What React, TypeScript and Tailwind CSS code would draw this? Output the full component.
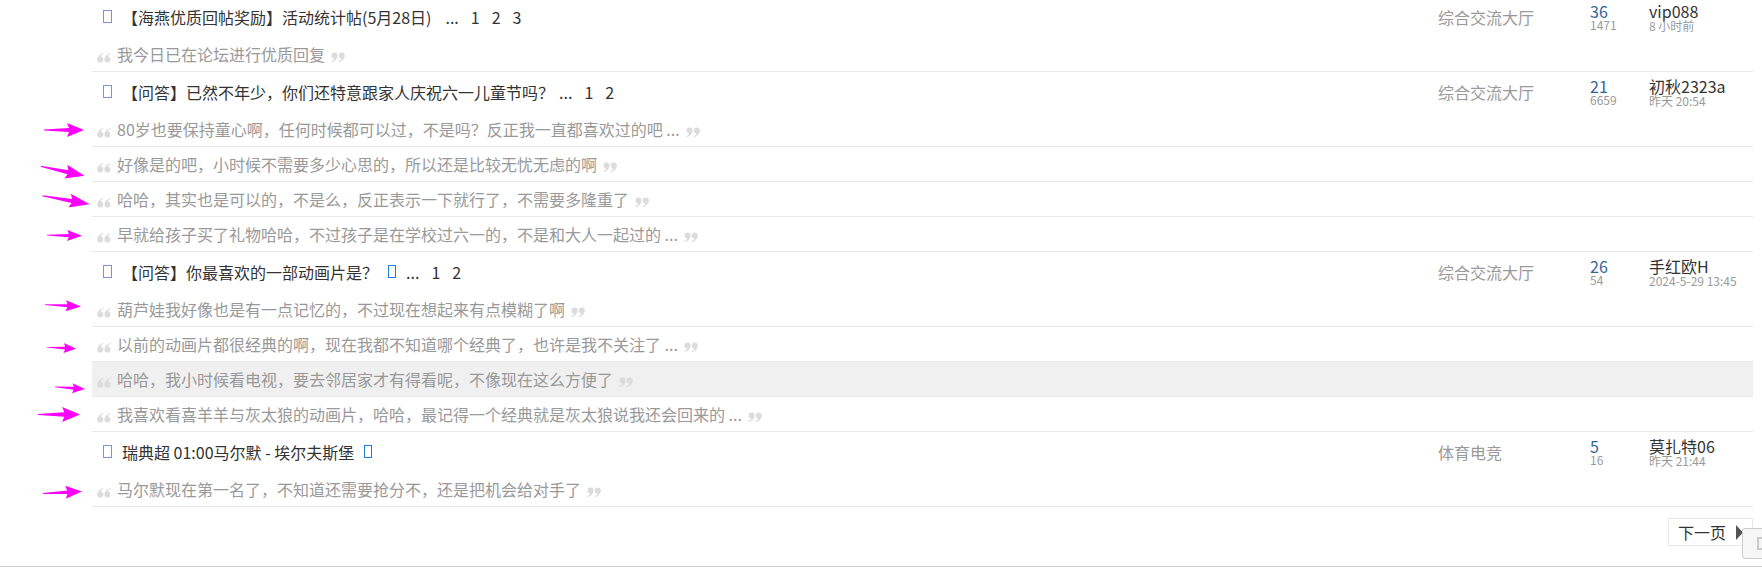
import React from "react";

type Arrow = { x: number; w: number; dy: number; rot: number; h?: number };
type Quote = { text: string; arrow?: Arrow; hover?: boolean };
type Thread = {
  title: string;
  badge?: boolean;
  dotsCls?: string;
  pages: string[];
  forum: string;
  replies: string;
  views: string;
  author: string;
  time: string;
  quotes: Quote[];
};

const threads: Thread[] = [
  {
    title: "【海燕优质回帖奖励】活动统计帖(5月28日)",
    dotsCls: "ml-[14px]",
    pages: ["1", "2", "3"],
    forum: "综合交流大厅",
    replies: "36",
    views: "1471",
    author: "vip088",
    time: "8 小时前",
    quotes: [{ text: "我今日已在论坛进行优质回复" }],
  },
  {
    title: "【问答】已然不年少，你们还特意跟家人庆祝六一儿童节吗？",
    dotsCls: "ml-[5px]",
    pages: ["1", "2"],
    forum: "综合交流大厅",
    replies: "21",
    views: "6659",
    author: "初秋2323a",
    time: "昨天 20:54",
    quotes: [
      {
        text: "80岁也要保持童心啊，任何时候都可以过，不是吗？反正我一直都喜欢过的吧 ...",
        arrow: { x: 44, w: 40, dy: 0, rot: 0 },
      },
      {
        text: "好像是的吧，小时候不需要多少心思的，所以还是比较无忧无虑的啊",
        arrow: { x: 40, w: 45, dy: 6, rot: 12 },
      },
      {
        text: "哈哈，其实也是可以的，不是么，反正表示一下就行了，不需要多隆重了",
        arrow: { x: 42, w: 48, dy: 0, rot: 10 },
      },
      {
        text: "早就给孩子买了礼物哈哈，不过孩子是在学校过六一的，不是和大人一起过的 ...",
        arrow: { x: 47, w: 35, dy: 1, rot: 1, h: 11 },
      },
    ],
  },
  {
    title: "【问答】你最喜欢的一部动画片是？",
    badge: true,
    dotsCls: "ml-[10px]",
    pages: ["1", "2"],
    forum: "综合交流大厅",
    replies: "26",
    views: "54",
    author: "手红欧H",
    time: "2024-5-29 13:45",
    quotes: [
      {
        text: "葫芦娃我好像也是有一点记忆的，不过现在想起来有点模糊了啊",
        arrow: { x: 45, w: 36, dy: -4, rot: 3, h: 11 },
      },
      {
        text: "以前的动画片都很经典的啊，现在我都不知道哪个经典了，也许是我不关注了 ...",
        arrow: { x: 47, w: 29, dy: 3, rot: 3, h: 10 },
      },
      {
        text: "哈哈，我小时候看电视，要去邻居家才有得看呢，不像现在这么方便了",
        arrow: { x: 55, w: 30, dy: 8, rot: 4, h: 10 },
        hover: true,
      },
      {
        text: "我喜欢看喜羊羊与灰太狼的动画片，哈哈，最记得一个经典就是灰太狼说我还会回来的 ...",
        arrow: { x: 38, w: 42, dy: 0, rot: 0, h: 15 },
      },
    ],
  },
  {
    title: "瑞典超 01:00马尔默 - 埃尔夫斯堡",
    badge: true,
    pages: [],
    forum: "体育电竞",
    replies: "5",
    views: "16",
    author: "莫扎特06",
    time: "昨天 21:44",
    quotes: [
      {
        text: "马尔默现在第一名了，不知道还需要抢分不，还是把机会给对手了",
        arrow: { x: 43, w: 39, dy: 3, rot: -3, h: 13 },
      },
    ],
  },
];

// big grey “ ” marks around each reply excerpt
function QuoteMark({ close }: { close?: boolean }) {
  const d =
    "M6 0.6 C2.8 1.6 0.2 4 0.2 7 A2.9 2.9 0 1 0 3.4 4.1 C3.7 3 4.6 2 6.3 1.5 Z";
  return (
    <svg width="14" height="11" viewBox="0 0 13.4 10" className="shrink-0 translate-y-[3px]">
      <g fill="#dcdcdc" transform={close ? "rotate(180 6.7 5)" : undefined}>
        <path d={d} />
        <path d={d} transform="translate(6.9 0)" />
      </g>
    </svg>
  );
}

function PinkArrow({ a }: { a: Arrow }) {
  const h = a.h ?? 14;
  return (
    <svg
      width={a.w}
      height={h}
      viewBox="0 0 40 14"
      preserveAspectRatio="none"
      style={{ marginLeft: a.x, transform: `translateY(${a.dy}px) rotate(${a.rot}deg)` }}
    >
      <path d="M0 6.5 L25 5 L23 0 L40 7 L23 14 L25 9 L0 7.5 Z" fill="#ff00ff" />
    </svg>
  );
}

function ThreadBlock({ t }: { t: Thread }) {
  return (
    <div>
      <div className="flex h-[40px]">
        <div className="w-[92px] shrink-0" />
        <div className="flex flex-1 items-center">
          <div className="flex flex-1 items-center text-[#333]">
            <span className="ml-[11px] h-[13px] w-[9px] -translate-y-[1px] border border-[#7d95cc]" />
            <span className="ml-[10px]">{t.title}</span>
            {t.badge && (
              <span className="ml-[10px] h-[13px] w-[8px] -translate-y-[1px] border-[1.5px] border-[#1e7fd8]" />
            )}
            {t.pages.length > 0 && (
              <span className={`${t.dotsCls ?? "ml-[10px]"} flex gap-[12px]`}>
                <span>...</span>
                {t.pages.map((p) => (
                  <span key={p}>{p}</span>
                ))}
              </span>
            )}
          </div>
          <div className="w-[152px] shrink-0 text-[#999]">{t.forum}</div>
          <div className="flex w-[59px] shrink-0 flex-col">
            <span className="leading-[16px] text-[#336699]">{t.replies}</span>
            <span className="text-[12px] leading-[12px] text-[#999]">{t.views}</span>
          </div>
          <div className="flex w-[104px] shrink-0 flex-col">
            <span className="leading-[16px] text-[#333]">{t.author}</span>
            <span className="text-[12px] leading-[13px] text-[#999]">{t.time}</span>
          </div>
        </div>
      </div>
      {t.quotes.map((q, i) => (
        <div key={i} className="flex h-[35px]">
          <div className="flex w-[92px] shrink-0 items-center">{q.arrow && <PinkArrow a={q.arrow} />}</div>
          <div
            className={`flex flex-1 items-center border-b border-[#e9e9e9] text-[#999] ${
              q.hover ? "bg-[#f0f0f0]" : ""
            }`}
          >
            <span className="ml-[5px]">
              <QuoteMark />
            </span>
            <span className="ml-[6px]">{q.text}</span>
            <span className="ml-[6px]">
              <QuoteMark close />
            </span>
          </div>
        </div>
      ))}
    </div>
  );
}

export default function App() {
  return (
    <div className="relative h-[575px] w-[1762px] overflow-hidden bg-white font-['Noto_Sans_CJK_SC',sans-serif] text-[16px] leading-[20px]">
      <div className="-mt-[3px] pr-[9px]">
        {threads.map((t, i) => (
          <ThreadBlock key={i} t={t} />
        ))}
        <div className="mt-[11px] flex justify-end">
          <div className="flex h-[28px] items-center border border-[#e8e8e8] bg-white px-[9px] text-[#333]">
            <span>下一页</span>
            <svg width="7" height="15" viewBox="0 0 7 15" className="ml-[10px]">
              <path d="M0 0 L7 7.5 L0 15 Z" fill="#555" />
            </svg>
          </div>
        </div>
      </div>
      <div className="mt-[20px] border-t border-[#cccccc]" />
      <div className="absolute left-[1742px] top-[528px] h-[31px] w-[40px] rounded-[3px] border border-[#cccccc] bg-[#f6f6f6]">
        <div className="ml-[14px] mt-[8px] h-[13px] w-[9px] border-2 border-[#cccccc]" />
      </div>
    </div>
  );
}
